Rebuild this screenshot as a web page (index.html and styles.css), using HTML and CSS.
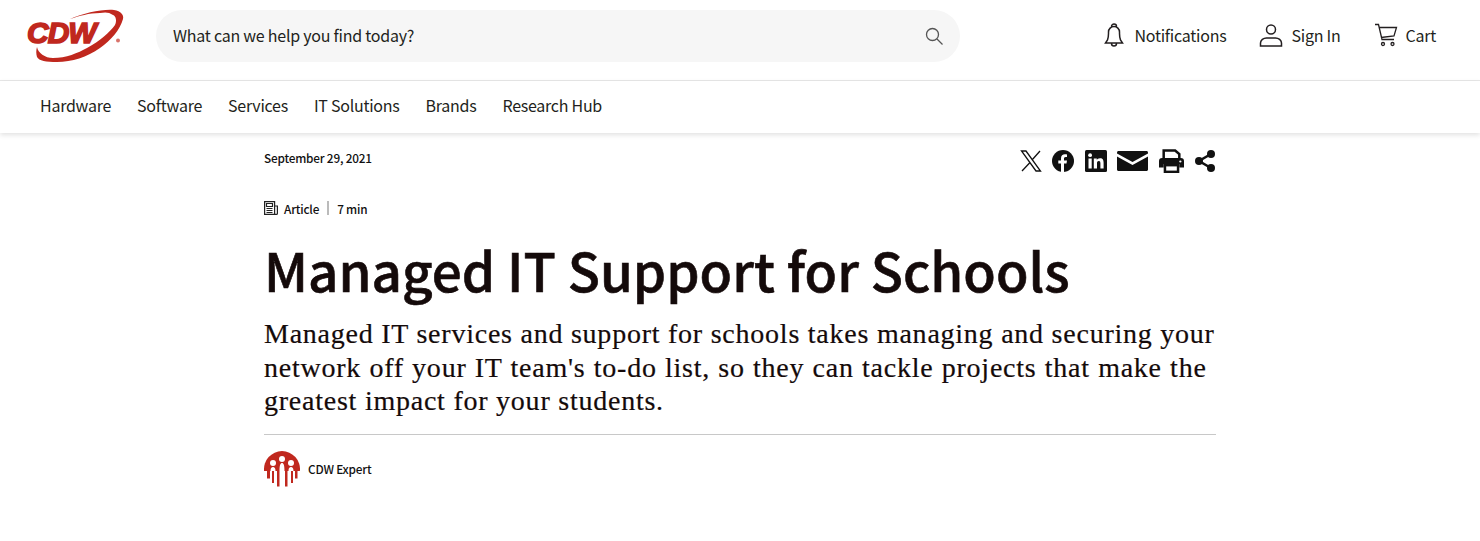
FILE: index.html
```html
<!DOCTYPE html>
<html lang="en">
<head>
    <meta charset="UTF-8">
    <meta name="viewport" content="width=device-width, initial-scale=1.0">
    <title>Managed IT Support for Schools</title>
    <link rel="stylesheet" href="styles.css">
</head>
<body>
    <header class="top-bar">
        <a class="logo" href="#">
            <svg class="logo-swoosh" width="98" height="56" viewBox="0 0 98 56">
                <path d="M44 11C58 5 76 1 88 2C95 3 98 7 97 11C94 22 85 32 74 40C61 49 46 54 31 54C20 54 13 53 11 49C10 46 10 42 11 39C12 45 19 50 27 50C40 50 52 45 61 40C74 33 84 24 89 17C91 13 90 8 87 7C83 4 79 4 74 5C63 5 53 8 44 11Z" fill="#c0281e"/>
                <circle cx="92" cy="32.500" r="2" fill="#d9736b"/>
            </svg>
            <span class="logo-text">CDW</span>
        </a>
        <div class="search">
            <span class="search-text">What can we help you find today?</span>
            <svg class="icon-search" width="20" height="20" viewBox="0 0 20 20" fill="none" stroke="#555" stroke-width="1.3">
                <circle cx="8.5" cy="8.5" r="6"/>
                <path d="M13 13l5.500 5.500"/>
            </svg>
        </div>
        <div class="account">
            <a class="account-link" href="#">
                <svg class="icon-bell" width="20" height="24" viewBox="0 0 20 24" fill="none" stroke="#231f20" stroke-width="1.500">
                    <path d="M7.500 3.500a2.500 2.500 0 0 1 5 0M3.500 17c.7-2 1-4 1-6.500V9a5.500 5.500 0 0 1 11 0v1.500c0 2.500.3 4.500 1 6.500l2 3H1.500zM7.500 20.500a2.500 2.500 0 0 0 5 0"/>
                </svg>
                Notifications
            </a>
            <a class="account-link" href="#">
                <svg width="24" height="24" viewBox="0 0 24 24" fill="none" stroke="#231f20" stroke-width="1.500">
                    <circle cx="12" cy="6.500" r="4.500"/>
                    <path d="M1.500 23v-3c0-3 3-5 6-5h9c3 0 6 2 6 5v3z"/>
                </svg>
                Sign In
            </a>
            <a class="account-link" href="#">
                <svg width="24" height="24" viewBox="0 0 24 24" fill="none" stroke="#231f20" stroke-width="1.300">
                    <path d="M1 1.500h3.500l3.500 15h12M5.500 4.500h17l-2.500 8.500-13 1.500"/>
                    <circle cx="9" cy="21" r="1.500"/>
                    <circle cx="18.500" cy="21" r="1.500"/>
                </svg>
                Cart
            </a>
        </div>
    </header>

    <nav class="main-nav">
        <a href="#">Hardware</a>
        <a href="#">Software</a>
        <a href="#">Services</a>
        <a href="#">IT Solutions</a>
        <a href="#">Brands</a>
        <a href="#">Research Hub</a>
    </nav>

    <main class="article">
        <div class="article-top">
            <div class="date">September 29, 2021</div>
            <div class="share">
                <svg width="22" height="24" viewBox="0 0 22 24" fill="none" stroke="#111" stroke-width="1.300">
                    <path d="M1.500 2h4.500l14.500 20h-4.500zM20 2l-8 9M10 13.500L2 22"/>
                </svg>
                <svg width="22" height="22" viewBox="0 0 22 22">
                    <circle cx="11" cy="11" r="11" fill="#111"/>
                    <path d="M9 22v-8.500H6.300v-3H9V8.300c0-2.700 1.600-4.100 4-4.100 1.100 0 2 .2 2 .2v2.600h-1.300c-1.300 0-1.700.8-1.700 1.600v1.900h3l-.5 3H12V22z" fill="#fff"/>
                </svg>
                <svg width="22" height="22" viewBox="0 0 22 22">
                    <rect width="22" height="22" rx="1.500" fill="#111"/>
                    <rect x="3.500" y="8.500" width="3.200" height="10" fill="#fff"/>
                    <circle cx="5.100" cy="5.200" r="1.900" fill="#fff"/>
                    <path d="M8.800 8.500h3v1.400c.5-.9 1.600-1.700 3.200-1.700 3 0 3.600 2 3.600 4.600v5.700h-3.200v-5c0-1.200-.1-2.600-1.600-2.600s-1.800 1.200-1.800 2.500v5.100H8.800z" fill="#fff"/>
                </svg>
                <svg width="31" height="20" viewBox="0 0 30 20" preserveAspectRatio="none">
                    <path d="M0 1.500C0 .600.600 0 1.500 0h27c.900 0 1.500.600 1.500 1.500v1L15 11 0 2.500z" fill="#111"/>
                    <path d="M0 5.500l15 8.500 15-8.500v13c0 .900-.600 1.500-1.500 1.500h-27C.600 20 0 19.400 0 18.500z" fill="#111"/>
                </svg>
                <svg width="25" height="24" viewBox="0 0 24 24" preserveAspectRatio="none">
                    <path d="M4.500 10V1.500h11L19.500 5v5" fill="none" stroke="#111" stroke-width="2.400"/>
                    <path d="M3 9h18a3 3 0 0 1 3 3v6.500h-4.500V15h-15v3.500H0V12a3 3 0 0 1 3-3z" fill="#111"/>
                    <rect x="5.700" y="16.200" width="12.600" height="6.600" fill="none" stroke="#111" stroke-width="2.400"/>
                    <circle cx="20.500" cy="12.500" r="1.100" fill="#fff"/>
                </svg>
                <svg width="22" height="24" viewBox="0 0 22 24">
                    <path d="M17 5L5 12l12 7" fill="none" stroke="#111" stroke-width="2.600"/>
                    <circle cx="17" cy="5" r="4" fill="#111"/>
                    <circle cx="5" cy="12" r="4" fill="#111"/>
                    <circle cx="17" cy="19" r="4" fill="#111"/>
                </svg>
            </div>
        </div>

        <div class="meta">
            <svg width="14" height="14" viewBox="0 0 14 14" fill="none" stroke="#222" stroke-width="1.200">
                <path d="M.6 .600h10v12.800H.6zM10.600 5h2.800v7.400a1 1 0 0 1-1 1h-1.800"/>
                <path d="M2.500 2.500h6v3h-6zM2.500 7.500h6M2.500 9.500h6M2.500 11.500h6"/>
            </svg>
            <span class="meta-type">Article</span>
            <span class="meta-sep"></span>
            <span>7 min</span>
        </div>

        <h1>Managed IT Support for Schools</h1>
        <p class="lead">
            <span class="lead-line">Managed IT services and support for schools takes managing and securing your</span>
            <span class="lead-line lead-line-wide">network off your IT team's to-do list, so they can tackle projects that make the</span>
            <span class="lead-line">greatest impact for your students.</span>
        </p>

        <div class="author">
            <svg width="36" height="36" viewBox="0 0 36 36">
                <path d="M.1 20A18 18 0 1 1 35.900 20z" fill="#c0281e"/>
                <rect x="3" y="19" width="3" height="8.500" fill="#c0281e"/>
                <rect x="8" y="19" width="2" height="13" fill="#c0281e"/>
                <rect x="13" y="19" width="2.500" height="16.500" fill="#c0281e"/>
                <rect x="21" y="19" width="2.500" height="16.500" fill="#c0281e"/>
                <rect x="27" y="19" width="2" height="13" fill="#c0281e"/>
                <rect x="31" y="19" width="2.500" height="8.500" fill="#c0281e"/>
                <circle cx="9" cy="12" r="3" fill="#fff"/>
                <circle cx="18" cy="8" r="3" fill="#fff"/>
                <circle cx="27" cy="12" r="3" fill="#fff"/>
                <path d="M6.500 20c0-3 1-4 2.500-4s2.500 1 2.500 4zM15.500 20c0-6 1-8 2.500-8s2.500 2 2.500 8zM24.500 20c0-3 1-4 2.500-4s2.500 1 2.500 4z" fill="#fff"/>
            </svg>
            <span>CDW Expert</span>
        </div>
    </main>
</body>
</html>
```

FILE: styles.css
```css
* {
    box-sizing: border-box;
}

html, body {
    height: 541px;
    overflow: hidden;
}

body {
    margin: 0;
    background-color: #fff;
    color: #231f20;
    font-family: "Noto Sans CJK JP", "Noto Sans", sans-serif;
}

a {
    color: inherit;
    text-decoration: none;
}

.top-bar {
    display: flex;
    align-items: center;
    height: 81px;
    padding: 0 44px 9px 26px;
    border-bottom: 1px solid #e8e8e8;
}

.logo {
    position: relative;
    display: block;
    width: 98px;
    height: 56px;
    margin-right: 32px;
}

.logo-swoosh {
    display: block;
}

.logo-text {
    position: absolute;
    left: 1px;
    top: 8px;
    font-family: "Liberation Sans", sans-serif;
    font-weight: 700;
    font-style: italic;
    font-size: 30px;
    line-height: 34px;
    letter-spacing: -1px;
    color: #c0281e;
    -webkit-text-stroke: 1.6px #c0281e;
}

.search {
    display: flex;
    align-items: center;
    justify-content: space-between;
    width: 804px;
    height: 52px;
    padding: 0 16px 0 17px;
    border-radius: 26px;
    background-color: #f6f6f6;
    font-size: 16px;
    letter-spacing: -0.24px;
}

.search-text {
    padding-bottom: 2px;
}

.account {
    display: flex;
    align-items: center;
    gap: 33px;
    margin-left: auto;
    margin-top: -2px;
    font-size: 16px;
    letter-spacing: -0.24px;
}

.account-link {
    display: flex;
    align-items: center;
    gap: 8px;
}

.icon-bell {
    margin-right: 2px;
}

.main-nav {
    position: relative;
    display: flex;
    align-items: center;
    gap: 26px;
    height: 52px;
    padding: 0 0 4px 40px;
    font-size: 16px;
    letter-spacing: -0.26px;
    box-shadow: 0 2px 5px rgba(0,0,0,0.12);
}

.article {
    width: 952px;
    margin-left: 264px;
}

.article-top {
    display: flex;
    justify-content: space-between;
    align-items: flex-start;
    height: 59px;
    padding-top: 16px;
}

.date {
    font-size: 11.800px;
    font-weight: 500;
    line-height: 18px;
    letter-spacing: -0.2px;
    color: #111;
}

.share {
    display: flex;
    align-items: center;
    gap: 10.500px;
}

.meta {
    display: flex;
    align-items: center;
    height: 32px;
    font-size: 11.800px;
    font-weight: 500;
    letter-spacing: -0.2px;
    color: #111;
}

.meta-type {
    margin-left: 6px;
}

.meta-sep {
    width: 2px;
    height: 14px;
    margin: 0 8px;
    background-color: #bbb;
}

h1 {
    margin: 10px 0 0;
    font-size: 53px;
    font-weight: 500;
    line-height: 70px;
    color: #140a0a;
    -webkit-text-stroke: 0.6px #140a0a;
}

.lead {
    margin: 0;
    padding: 13px 0 16px;
    border-bottom: 1px solid #c8c8c8;
    font-family: "Liberation Serif", serif;
    font-size: 28px;
    line-height: 33.500px;
    letter-spacing: 0.76px;
    white-space: nowrap;
    color: #140a0a;
    -webkit-text-stroke: 0.2px #140a0a;
}

.lead-line {
    display: block;
}

.lead-line-wide {
    word-spacing: 0.55px;
}

.author {
    display: flex;
    align-items: center;
    gap: 8px;
    margin-top: 16px;
    font-size: 11.800px;
    font-weight: 500;
    letter-spacing: -0.2px;
    color: #111;
}
```
